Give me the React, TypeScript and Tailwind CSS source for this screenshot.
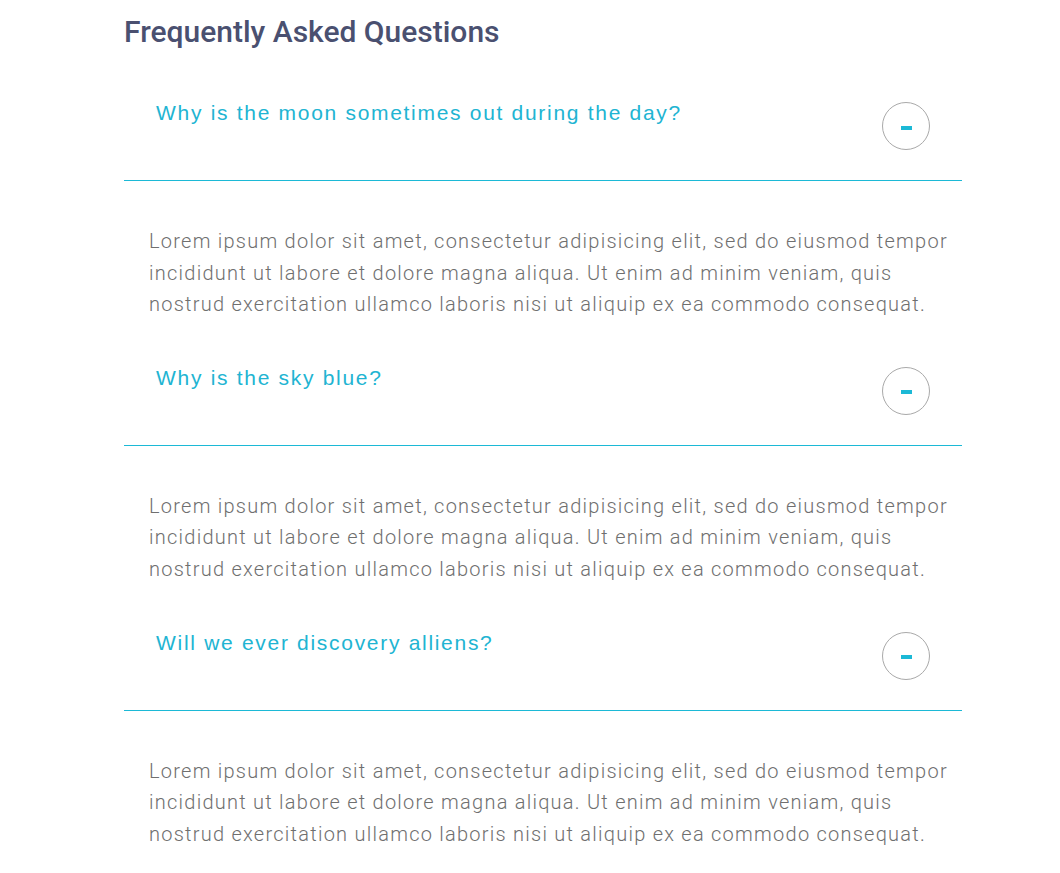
const items = [
    "Why is the moon sometimes out during the day?",
    "Why is the sky blue?",
    "Will we ever discovery alliens?",
];

const lorem = [
    "Lorem ipsum dolor sit amet, consectetur adipisicing elit, sed do eiusmod tempor",
    "incididunt ut labore et dolore magna aliqua. Ut enim ad minim veniam, quis",
    "nostrud exercitation ullamco laboris nisi ut aliquip ex ea commodo consequat.",
];

const FaqItem = ({ question }: { question: string }) => (
    <div>
        <div className="flex items-start justify-between border-b border-[#1cb9d6] pl-8 pr-8 pb-[30px]">
            <h3 className="text-[21px] leading-6 tracking-[1.7px] text-[#21b4d2] font-['Liberation_Sans',Arial,sans-serif]">
                {question}
            </h3>
            <button className="mt-px flex size-12 items-center justify-center rounded-full border border-[#a9a9a9] bg-white">
                <span className="mt-[3px] block h-[4px] w-[11px] bg-[#1cb9d6]" />
            </button>
        </div>
        <p className="mt-[45px] pl-[25px] text-[20px] font-light leading-[31.5px] tracking-[1.25px] text-[#6f6f6f]">
            {lorem.map((line) => (
                <span key={line} className="block whitespace-nowrap">
                    {line}
                </span>
            ))}
        </p>
    </div>
);

export default function App() {
    return (
        <div className="min-h-[873px] bg-white font-['Roboto',sans-serif]">
            <div className="ml-[124px] w-[838px] pt-[13px]">
                <h2 className="text-[30px] font-medium leading-[38px] text-[#4a5070]">
                    Frequently Asked Questions
                </h2>
                <div className="mt-[50px] flex flex-col gap-[45.4px]">
                    {items.map((q) => (
                        <FaqItem key={q} question={q} />
                    ))}
                </div>
            </div>
        </div>
    );
}
